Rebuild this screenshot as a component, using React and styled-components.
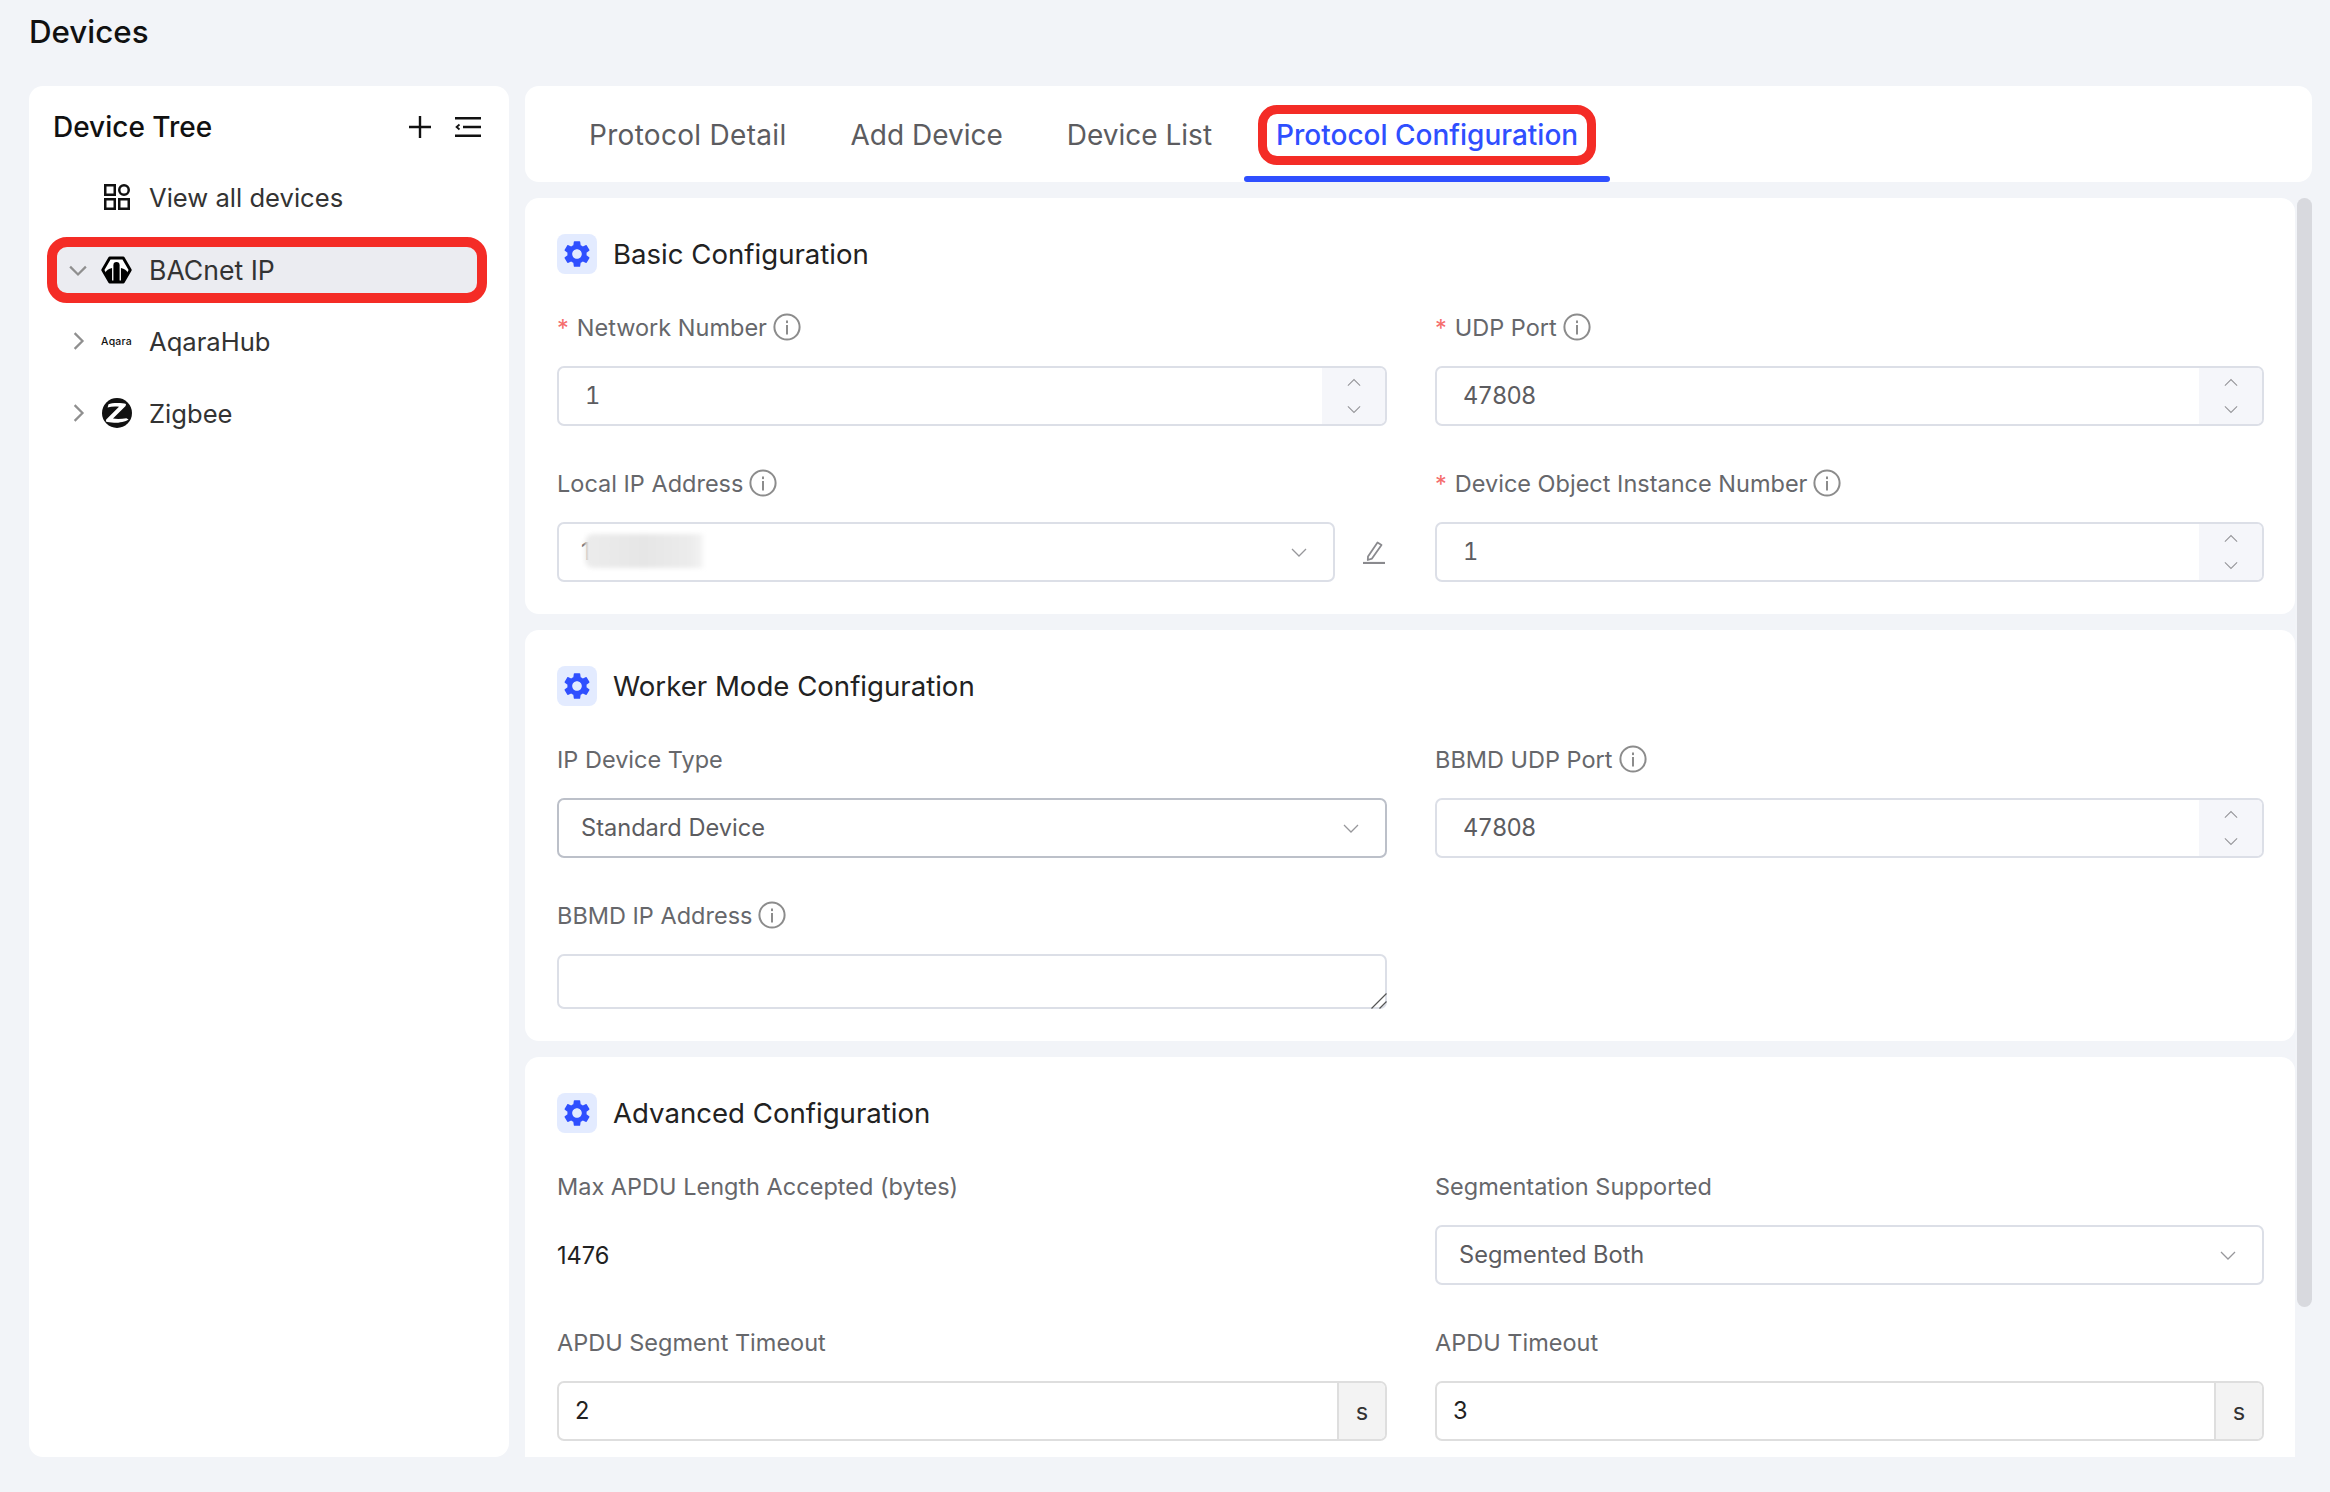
import React from "react";
import styled, { createGlobalStyle } from "styled-components";
import { MdSettings } from "react-icons/md";

const GlobalStyle = createGlobalStyle`
  html, body {
    margin: 0;
    height: 100%;
    background: #f2f4f8;
    font-family: Inter, "Noto Sans", sans-serif;
    overflow: hidden;
  }
`;

const Page = styled.div`
  display: flex;
  flex-direction: column;
  height: 100vh;
  box-sizing: border-box;
  padding: 0 18px 35px 29px;
`;

const PageTitle = styled.h1`
  flex: 0 0 86px;
  margin: 0;
  padding-top: 12px;
  box-sizing: border-box;
  font-size: 31.3px;
  line-height: 40px;
  font-weight: 500;
  color: #111;
`;

const Body = styled.div`
  display: flex;
  flex: 1;
  min-height: 0;
  gap: 16px;
`;

const Sidebar = styled.aside`
  flex: 0 0 480px;
  box-sizing: border-box;
  padding: 27px 28px 0 24px;
  background: #fff;
  border-radius: 14px;
`;

const TreeHead = styled.div`
  display: flex;
  align-items: center;
  justify-content: space-between;
  height: 28px;
  margin-bottom: 34px;
`;

const TreeTitle = styled.div`
  font-size: 28px;
  font-weight: 500;
  color: #111;
`;

const TreeActions = styled.div`
  display: flex;
  align-items: center;
  gap: 24px;
`;

const TreeList = styled.div`
  display: flex;
  flex-direction: column;
  gap: 26px;
  margin: 0 4px 0 4px;
`;

const TreeRow = styled.div`
  display: flex;
  align-items: center;
  height: 46px;
  box-sizing: border-box;
  padding: 0 0 ${(p) => (p.$active ? "0" : "2px")} 12px;
  border-radius: 10px;
  font-size: ${(p) => (p.$active ? "26.6px" : "25.6px")};
  color: #333;
  background: ${(p) => (p.$active ? "#ebecf1" : "transparent")};
  outline: ${(p) => (p.$active ? "10px solid #f42c26" : "none")};
`;

const Arrow = styled.span`
  display: flex;
  justify-content: center;
  width: 18px;
`;

const LogoSlot = styled.span`
  display: flex;
  align-items: center;
  justify-content: center;
  width: 31px;
  margin: 0 17px 0 14px;
`;

const AqaraMark = styled.span`
  font-size: 10.5px;
  font-weight: 500;
  letter-spacing: 0.2px;
  color: #111;
`;

const Main = styled.div`
  display: flex;
  flex-direction: column;
  flex: 1;
  min-width: 0;
  gap: 16px;
`;

const TabBar = styled.nav`
  display: flex;
  flex: 0 0 96px;
  padding-left: 32px;
  background: #fff;
  border-radius: 14px;
`;

const Tab = styled.div`
  position: relative;
  display: flex;
  align-items: center;
  height: 96px;
  padding: 2px 32px 0;
  box-sizing: border-box;
  font-size: 28px;
  letter-spacing: ${(p) => p.$spacing || "0"};
  color: ${(p) => (p.$active ? "#2f4fff" : "#5c5c60")};
  font-weight: ${(p) => (p.$active ? 500 : 400)};

  &::after {
    content: "";
    display: ${(p) => (p.$active ? "block" : "none")};
    position: absolute;
    left: 0;
    right: 0;
    bottom: 0;
    height: 6px;
    border-radius: 3px;
    background: #2f4fff;
  }
`;

const MarkedText = styled.span`
  height: 42px;
  line-height: 42px;
  padding: 0 9px;
  margin: 0 -9px;
  border-radius: 10px;
  outline: 9px solid #f42c26;
  white-space: nowrap;
`;

const ScrollArea = styled.div`
  display: flex;
  flex: 1;
  min-height: 0;
  overflow: hidden;
`;

const Cards = styled.div`
  display: flex;
  flex-direction: column;
  flex: 1;
  gap: 16px;
  min-width: 0;
`;

const ScrollTrack = styled.div`
  flex: 0 0 17px;
  padding-left: 2px;
  box-sizing: border-box;
`;

const ScrollThumb = styled.div`
  height: 1109px;
  border-radius: 8px;
  background: #d8d9de;
`;

const Card = styled.section`
  flex: none;
  box-sizing: border-box;
  padding: 36px 31px 32px 32px;
  background: #fff;
  border-radius: 14px;
`;

const SectionHead = styled.div`
  display: flex;
  align-items: center;
  gap: 16px;
  height: 40px;
  margin-bottom: 34px;
  font-size: 27.6px;
  color: #222;
`;

const GearBox = styled.span`
  display: flex;
  align-items: center;
  justify-content: center;
  width: 40px;
  height: 40px;
  border-radius: 8px;
  background: #e3ebff;
  color: #2f4fff;
`;

const FormGrid = styled.div`
  display: grid;
  grid-template-columns: 830px 829px;
  column-gap: 48px;
  row-gap: 38px;
`;

const Field = styled.div`
  min-width: 0;
`;

const Label = styled.div`
  display: flex;
  align-items: center;
  height: 40px;
  box-sizing: border-box;
  margin-bottom: 18px;
  padding-bottom: 2px;
  font-size: 23.5px;
  color: #66676b;
`;

const Required = styled.span`
  margin-right: 8px;
  color: #f56c6c;
`;

const InfoWrap = styled.span`
  display: flex;
  margin-left: 6px;
`;

const Box = styled.div`
  display: flex;
  align-items: center;
  height: 60px;
  box-sizing: border-box;
  border: 2px solid ${(p) => p.$border || "#dcdfe7"};
  border-radius: 7px;
  font-size: 23.6px;
  color: #5c5c60;
  background: #fff;
  overflow: hidden;
`;

const NumberText = styled.div`
  flex: 1;
  padding: 0 0 2px 26px;
  font-variant-numeric: tabular-nums;
  letter-spacing: -0.8px;
`;

const Stepper = styled.div`
  display: flex;
  flex: 0 0 63px;
  flex-direction: column;
  align-items: center;
  justify-content: center;
  gap: 12px;
  align-self: stretch;
  background: #f5f6fa;
`;

const SelectText = styled.div`
  flex: 1;
  display: flex;
  align-items: center;
  padding: 0 0 2px 22px;
`;

const SelectArrow = styled.span`
  display: flex;
  margin-right: 26px;
`;

const Smudge = styled.span`
  position: relative;
  width: 118px;
  height: 34px;
  margin-left: -6px;
  border-radius: 8px 0 0 8px;
  background: linear-gradient(90deg, #ececec, #e6e6e6 50%, #ececec 90%, #f4f4f4);
  filter: blur(2px);
`;

const IpRow = styled.div`
  display: flex;
  align-items: center;
`;

const IpSelect = styled(Box)`
  flex: 0 0 778px;
`;

const EditButton = styled.span`
  display: flex;
  margin-left: 27px;
`;

const TextareaWrap = styled.div`
  position: relative;
  height: 55px;
`;

const BigTextarea = styled.textarea`
  display: block;
  width: 100%;
  height: 55px;
  box-sizing: border-box;
  border: 2px solid #dcdfe7;
  border-radius: 7px;
  resize: none;
  outline: none;
`;

const ResizeGrip = styled.svg`
  position: absolute;
  right: 0;
  bottom: 0;
`;

const PlainValue = styled.div`
  display: flex;
  align-items: center;
  height: 60px;
  font-size: 23.6px;
  color: #222;
`;

const SuffixText = styled.div`
  flex: 1;
  padding: 0 0 2px 16px;
  color: #222;
`;

const Suffix = styled.div`
  display: flex;
  align-items: center;
  justify-content: center;
  flex: 0 0 46px;
  align-self: stretch;
  border-left: 2px solid #dedede;
  background: #f3f3f3;
  color: #333;
  font-size: 23.6px;
`;

const Chevron = ({ dir = "down", size = 16, color = "#97979b", width = 1.3 }) => {
  const points = {
    down: "1,5 8,12 15,5",
    up: "1,11 8,4 15,11",
    right: "5,1 12,8 5,15"
  }[dir];
  return (
    <svg width={size} height={size} viewBox="0 0 16 16" fill="none">
      <polyline points={points} stroke={color} strokeWidth={width} />
    </svg>
  );
};

const InfoIcon = () => (
  <svg width="28" height="28" viewBox="0 0 28 28" fill="none">
    <circle cx="14" cy="14" r="12.6" stroke="#8c8c8c" strokeWidth="2" />
    <rect x="13" y="7.5" width="2" height="2.6" fill="#8c8c8c" />
    <rect x="13" y="12" width="2" height="9.5" fill="#8c8c8c" />
  </svg>
);

const PlusIcon = () => (
  <svg width="22" height="22" viewBox="0 0 22 22">
    <path d="M11 0v22M0 11h22" stroke="#111" strokeWidth="2.4" />
  </svg>
);

const CollapseIcon = () => (
  <svg width="26" height="20" viewBox="0 0 26 20" fill="none">
    <path d="M0 1.2h26M8 10h18M0 18.8h26" stroke="#111" strokeWidth="2.4" />
    <path d="M4.5 7.5 1.6 10l2.9 2.5" stroke="#111" strokeWidth="1.8" />
  </svg>
);

const GridIcon = () => (
  <svg width="26" height="26" viewBox="0 0 26 26" fill="none" stroke="#111" strokeWidth="2.5">
    <rect x="1.25" y="1.25" width="9.5" height="9.5" />
    <circle cx="20" cy="6" r="4.75" />
    <rect x="1.25" y="15.25" width="9.5" height="9.5" />
    <rect x="15.25" y="15.25" width="9.5" height="9.5" />
  </svg>
);

const BacnetIcon = () => (
  <svg width="32" height="28" viewBox="0 0 32 28">
    <path
      d="M9 1.6h14L30.2 14 23 26.4H9L1.8 14Z"
      fill="#fff"
      stroke="#000"
      strokeWidth="3"
      strokeLinejoin="round"
    />
    <path d="M12.8 27V9a3.2 3.2 0 0 1 6.4 0v18Z" fill="#000" />
    <path d="M9 27 4.5 17Q6 13 11.4 12V27Z" fill="#000" />
    <path d="M23 27l4.5-10Q26 13 20.6 12V27Z" fill="#000" />
  </svg>
);

const ZigbeeIcon = () => (
  <svg width="30" height="30" viewBox="0 0 30 30">
    <circle cx="15" cy="15" r="15" fill="#111" />
    <path
      d="M6.5 6.2c3-1.6 14-1.6 17.5-.2L23.6 8 11 20.6c4 .6 9 .4 13.4-.4l2.2 1.2C22 25 9 25.6 3.8 23.6l.4-2L17 8.8c-4-.4-8-.2-11.4.6Z"
      fill="#fff"
    />
  </svg>
);

const Gear = () => <MdSettings size={32} />;

const SectionTitle = ({ children }) => (
  <SectionHead>
    <GearBox>
      <Gear />
    </GearBox>
    {children}
  </SectionHead>
);

const FieldLabel = ({ required, info, children }) => (
  <Label>
    {required && <Required>*</Required>}
    {children}
    {info && (
      <InfoWrap>
        <InfoIcon />
      </InfoWrap>
    )}
  </Label>
);

const NumberInput = ({ value }) => (
  <Box>
    <NumberText>{value}</NumberText>
    <Stepper>
      <Chevron dir="up" size={14} />
      <Chevron dir="down" size={14} />
    </Stepper>
  </Box>
);

const SelectBox = ({ value, border }) => (
  <Box $border={border}>
    <SelectText>{value}</SelectText>
    <SelectArrow>
      <Chevron />
    </SelectArrow>
  </Box>
);

const UnitInput = ({ value }) => (
  <Box $border="#dedede">
    <SuffixText>{value}</SuffixText>
    <Suffix>s</Suffix>
  </Box>
);

export default function App() {
  return (
    <Page>
      <GlobalStyle />
      <PageTitle>Devices</PageTitle>
      <Body>
        <Sidebar>
          <TreeHead>
            <TreeTitle>Device Tree</TreeTitle>
            <TreeActions>
              <PlusIcon />
              <CollapseIcon />
            </TreeActions>
          </TreeHead>
          <TreeList>
            <TreeRow>
              <Arrow />
              <LogoSlot>
                <GridIcon />
              </LogoSlot>
              View all devices
            </TreeRow>
            <TreeRow $active>
              <Arrow>
                <Chevron dir="down" size={18} color="#8f8f8f" width={2} />
              </Arrow>
              <LogoSlot>
                <BacnetIcon />
              </LogoSlot>
              BACnet IP
            </TreeRow>
            <TreeRow>
              <Arrow>
                <Chevron dir="right" size={18} color="#8f8f8f" width={2} />
              </Arrow>
              <LogoSlot>
                <AqaraMark>Aqara</AqaraMark>
              </LogoSlot>
              AqaraHub
            </TreeRow>
            <TreeRow>
              <Arrow>
                <Chevron dir="right" size={18} color="#8f8f8f" width={2} />
              </Arrow>
              <LogoSlot>
                <ZigbeeIcon />
              </LogoSlot>
              Zigbee
            </TreeRow>
          </TreeList>
        </Sidebar>
        <Main>
          <TabBar>
            <Tab $spacing="0.3px">Protocol Detail</Tab>
            <Tab>Add Device</Tab>
            <Tab>Device List</Tab>
            <Tab $active>
              <MarkedText>Protocol Configuration</MarkedText>
            </Tab>
          </TabBar>
          <ScrollArea>
            <Cards>
              <Card>
                <SectionTitle>Basic Configuration</SectionTitle>
                <FormGrid>
                  <Field>
                    <FieldLabel required info>Network Number</FieldLabel>
                    <NumberInput value="1" />
                  </Field>
                  <Field>
                    <FieldLabel required info>UDP Port</FieldLabel>
                    <NumberInput value="47808" />
                  </Field>
                  <Field>
                    <FieldLabel info>Local IP Address</FieldLabel>
                    <IpRow>
                      <IpSelect>
                        <SelectText>
                          1
                          <Smudge />
                        </SelectText>
                        <SelectArrow>
                          <Chevron />
                        </SelectArrow>
                      </IpSelect>
                      <EditButton>
                        <svg width="24" height="24" viewBox="0 0 24 24" fill="none" stroke="#8a8a8e" strokeWidth="1.8">
                          <path d="M6 16.5 15.5 2.5l4 2.6-9.5 13.5-4.2 1.4Z" strokeLinejoin="round" />
                          <path d="M1 23h22" strokeWidth="2.2" />
                        </svg>
                      </EditButton>
                    </IpRow>
                  </Field>
                  <Field>
                    <FieldLabel required info>Device Object Instance Number</FieldLabel>
                    <NumberInput value="1" />
                  </Field>
                </FormGrid>
              </Card>
              <Card>
                <SectionTitle>Worker Mode Configuration</SectionTitle>
                <FormGrid>
                  <Field>
                    <FieldLabel>IP Device Type</FieldLabel>
                    <SelectBox value="Standard Device" border="#bcc0c9" />
                  </Field>
                  <Field>
                    <FieldLabel info>BBMD UDP Port</FieldLabel>
                    <NumberInput value="47808" />
                  </Field>
                  <Field>
                    <FieldLabel info>BBMD IP Address</FieldLabel>
                    <TextareaWrap>
                      <BigTextarea />
                      <ResizeGrip width="16" height="16" viewBox="0 0 16 16" fill="none" stroke="#555" strokeWidth="1.2">
                        <path d="M15.5.5.5 15.5M15.5 8.5l-7 7" />
                      </ResizeGrip>
                    </TextareaWrap>
                  </Field>
                </FormGrid>
              </Card>
              <Card>
                <SectionTitle>Advanced Configuration</SectionTitle>
                <FormGrid>
                  <Field>
                    <FieldLabel>Max APDU Length Accepted (bytes)</FieldLabel>
                    <PlainValue>1476</PlainValue>
                  </Field>
                  <Field>
                    <FieldLabel>Segmentation Supported</FieldLabel>
                    <SelectBox value="Segmented Both" />
                  </Field>
                  <Field>
                    <FieldLabel>APDU Segment Timeout</FieldLabel>
                    <UnitInput value="2" />
                  </Field>
                  <Field>
                    <FieldLabel>APDU Timeout</FieldLabel>
                    <UnitInput value="3" />
                  </Field>
                </FormGrid>
              </Card>
            </Cards>
            <ScrollTrack>
              <ScrollThumb />
            </ScrollTrack>
          </ScrollArea>
        </Main>
      </Body>
    </Page>
  );
}
